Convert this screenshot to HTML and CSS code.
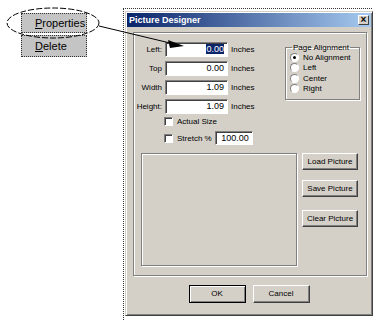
FILE: index.html
```html
<!DOCTYPE html>
<html lang="en">
<head>
  <meta charset="UTF-8" />
  <title>Picture Designer</title>
  <link rel="stylesheet" href="styles.css">
</head>
<body>
  <div class="page">
    <!-- Kontextmenue links -->
    <div class="menu">
      <div class="menu-item"><u>P</u>roperties</div>
      <div class="menu-item"><u>D</u>elete</div>
    </div>

    <!-- gepunkteter Rahmen um den Dialog -->
    <div class="frame">
      <div class="dialog">
        <div class="titlebar">
          <span class="title">Picture Designer</span>
          <span class="close">&#215;</span>
        </div>

        <div class="dialog-body">
          <div class="panel">
            <div class="panel-top">
              <div class="fields">
                <label>Left:</label><div class="input selected"><span>0.00</span></div><span>Inches</span>
                <label>Top</label><div class="input">0.00</div><span>Inches</span>
                <label>Width</label><div class="input">1.09</div><span>Inches</span>
                <label>Height:</label><div class="input">1.09</div><span>Inches</span>
              </div>

              <fieldset class="align">
                <legend>Page Alignment</legend>
                <div class="radio"><span class="dot checked"></span>No Alignment</div>
                <div class="radio"><span class="dot"></span>Left</div>
                <div class="radio"><span class="dot"></span>Center</div>
                <div class="radio"><span class="dot"></span>Right</div>
              </fieldset>
            </div>

            <div class="checks">
              <div class="check"><span class="box"></span>Actual Size</div>
              <div class="check"><span class="box"></span>Stretch %<div class="input small">100.00</div></div>
            </div>

            <div class="panel-bottom">
              <div class="picture"></div>
              <div class="pic-buttons">
                <div class="button">Load Picture</div>
                <div class="button">Save Picture</div>
                <div class="button clear">Clear Picture</div>
              </div>
            </div>
          </div>

          <div class="actions">
            <div class="button default">OK</div>
            <div class="button">Cancel</div>
          </div>
        </div>
      </div>
    </div>

    <!-- Ellipse + Pfeil liegen ueber allem -->
    <svg class="callout" width="380" height="324" viewBox="0 0 380 324">
      <ellipse cx="53" cy="23" rx="46" ry="15" fill="none" stroke="#000" stroke-width="1" stroke-dasharray="6 2"/>
      <line x1="99" y1="26" x2="170" y2="43" stroke="#000" stroke-width="1"/>
      <polygon points="168,40 184,46 170,48" fill="#000"/>
    </svg>
  </div>
</body>
</html>
```

FILE: styles.css
```css
:root {
  --face: #d4d0c8;
  --shadow: #808080;
  --dark: #404040;
  --light: #ffffff;
  --navy: #0a246a;
  --sky: #a6caf0;
}

html, body {
  margin: 0;
  padding: 0;
  background: #ffffff;
}
body {
  font-family: "Liberation Sans", Arial, sans-serif;
  font-size: 8px;
  color: #000;
}

.page {
  position: relative;
  width: 380px;
  height: 324px;
  display: flex;
  align-items: flex-start;
  padding-top: 8px;
  box-sizing: border-box;
}

/* 1) Menue */
.menu {
  margin-top: 5px;
  margin-left: 21px;
  width: 66px;
  display: flex;
  flex-direction: column;
  gap: 2px;
}
.menu-item {
  height: 20px;
  box-sizing: border-box;
  border: 1px dotted #333;
  background: #c4c4c4;
  font-size: 11px;
  line-height: 18px;
  padding-left: 13px;
}
.menu-item:last-child {
  height: 22px;
  line-height: 20px;
}

/* 2) Rahmen + Dialog */
.frame {
  margin-left: 36px;
  width: 249px;
  height: 312px;
  box-sizing: border-box;
  border-top: 1px dotted #333;
  border-left: 1px dotted #333;
  padding: 2px 0 0 1px;
}
.dialog {
  width: 248px;
  height: 305px;
  box-sizing: border-box;
  background: var(--face);
  border: 1px solid;
  border-color: var(--face) var(--dark) var(--dark) var(--face);
  box-shadow: inset 1px 1px 0 var(--light), inset -1px -1px 0 var(--shadow);
  padding: 1px;
  display: flex;
  flex-direction: column;
}
.titlebar {
  height: 14px;
  background: linear-gradient(to right, var(--navy), var(--sky));
  display: flex;
  align-items: center;
  justify-content: space-between;
  padding: 0 2px 0 2px;
}
.title {
  color: #fff;
  font-weight: bold;
  font-size: 9px;
}
.close {
  width: 11px;
  height: 10px;
  box-sizing: border-box;
  background: var(--face);
  border: 1px solid;
  border-color: var(--light) var(--dark) var(--dark) var(--light);
  font-size: 10px;
  font-weight: bold;
  line-height: 7px;
  text-align: center;
}

.dialog-body {
  flex: 1;
  display: flex;
  flex-direction: column;
  padding: 5px 4px 0 6px;
}

/* Etched-Rahmen */
.panel {
  height: 244px;
  box-sizing: border-box;
  border: 1px solid var(--shadow);
  box-shadow: 1px 1px 0 var(--light), inset 1px 1px 0 var(--light);
  padding: 8px 6px 0 2px;
  display: flex;
  flex-direction: column;
}
.panel-top {
  display: flex;
  justify-content: space-between;
  align-items: flex-start;
}
.fields {
  display: grid;
  grid-template-columns: 26px 63px auto;
  column-gap: 3px;
  row-gap: 4px;
  align-items: center;
  margin-top: 1px;
}
.fields label {
  text-align: right;
}

.input {
  height: 15px;
  box-sizing: border-box;
  background: #fff;
  border: 1px solid;
  border-color: var(--shadow) var(--light) var(--light) var(--shadow);
  box-shadow: inset 1px 1px 0 var(--dark);
  text-align: right;
  font-size: 9px;
  line-height: 13px;
  padding-right: 3px;
}
.input.selected span {
  background: var(--navy);
  color: #fff;
}
.input.small {
  width: 38px;
  height: 14px;
  margin-left: 3px;
}

.align {
  margin: 2px 0 0 0;
  padding: 0 0 3px 4px;
  width: 75px;
  height: 57px;
  box-sizing: border-box;
  border: 1px solid var(--shadow);
  box-shadow: inset 1px 1px 0 var(--light), 1px 1px 0 var(--light);
}
.align legend {
  padding: 0 1px;
  margin-left: 2px;
  font-size: 8px;
}
.radio {
  display: flex;
  align-items: center;
  height: 10.5px;
}
.dot {
  width: 9px;
  height: 9px;
  box-sizing: border-box;
  border-radius: 50%;
  background: #fff;
  border: 1px solid;
  border-color: var(--shadow) var(--light) var(--light) var(--shadow);
  margin-right: 4px;
  display: flex;
  align-items: center;
  justify-content: center;
}
.dot.checked::after {
  content: "";
  width: 3px;
  height: 3px;
  border-radius: 50%;
  background: #000;
}

.checks {
  margin-left: 28px;
  margin-top: 2px;
  display: flex;
  flex-direction: column;
  gap: 4px;
}
.check {
  display: flex;
  align-items: center;
  height: 11px;
}
.check:last-child {
  height: 14px;
}
.box {
  width: 9px;
  height: 9px;
  box-sizing: border-box;
  background: #fff;
  border: 1px solid;
  border-color: var(--shadow) var(--light) var(--light) var(--shadow);
  box-shadow: inset 1px 1px 0 var(--dark);
  margin-right: 4px;
}

.panel-bottom {
  display: flex;
  margin-top: 8px;
  margin-left: 5px;
  gap: 5px;
}
.picture {
  width: 156px;
  height: 113px;
  box-sizing: border-box;
  border: 1px solid var(--shadow);
  box-shadow: 1px 1px 0 var(--light), inset 1px 1px 0 var(--light);
}
.pic-buttons {
  display: flex;
  flex-direction: column;
  gap: 10px;
}
.pic-buttons .clear {
  margin-top: 3px;
}

.button {
  width: 56px;
  height: 17px;
  box-sizing: border-box;
  background: var(--face);
  border: 1px solid;
  border-color: var(--light) var(--dark) var(--dark) var(--light);
  box-shadow: inset -1px -1px 0 var(--shadow);
  text-align: center;
  line-height: 15px;
  font-size: 8px;
}

.actions {
  display: flex;
  justify-content: center;
  gap: 7px;
  margin-top: 9px;
  padding-right: 2px;
}
.actions .button {
  width: 57px;
  height: 18px;
  line-height: 16px;
}
.button.default {
  border: 1px solid #000;
  box-shadow: inset 1px 1px 0 var(--light), inset -1px -1px 0 var(--shadow);
}

/* Ueberlagerung: Ellipse und Pfeil */
.callout {
  position: absolute;
  left: 0;
  top: 0;
  pointer-events: none;
}
```
